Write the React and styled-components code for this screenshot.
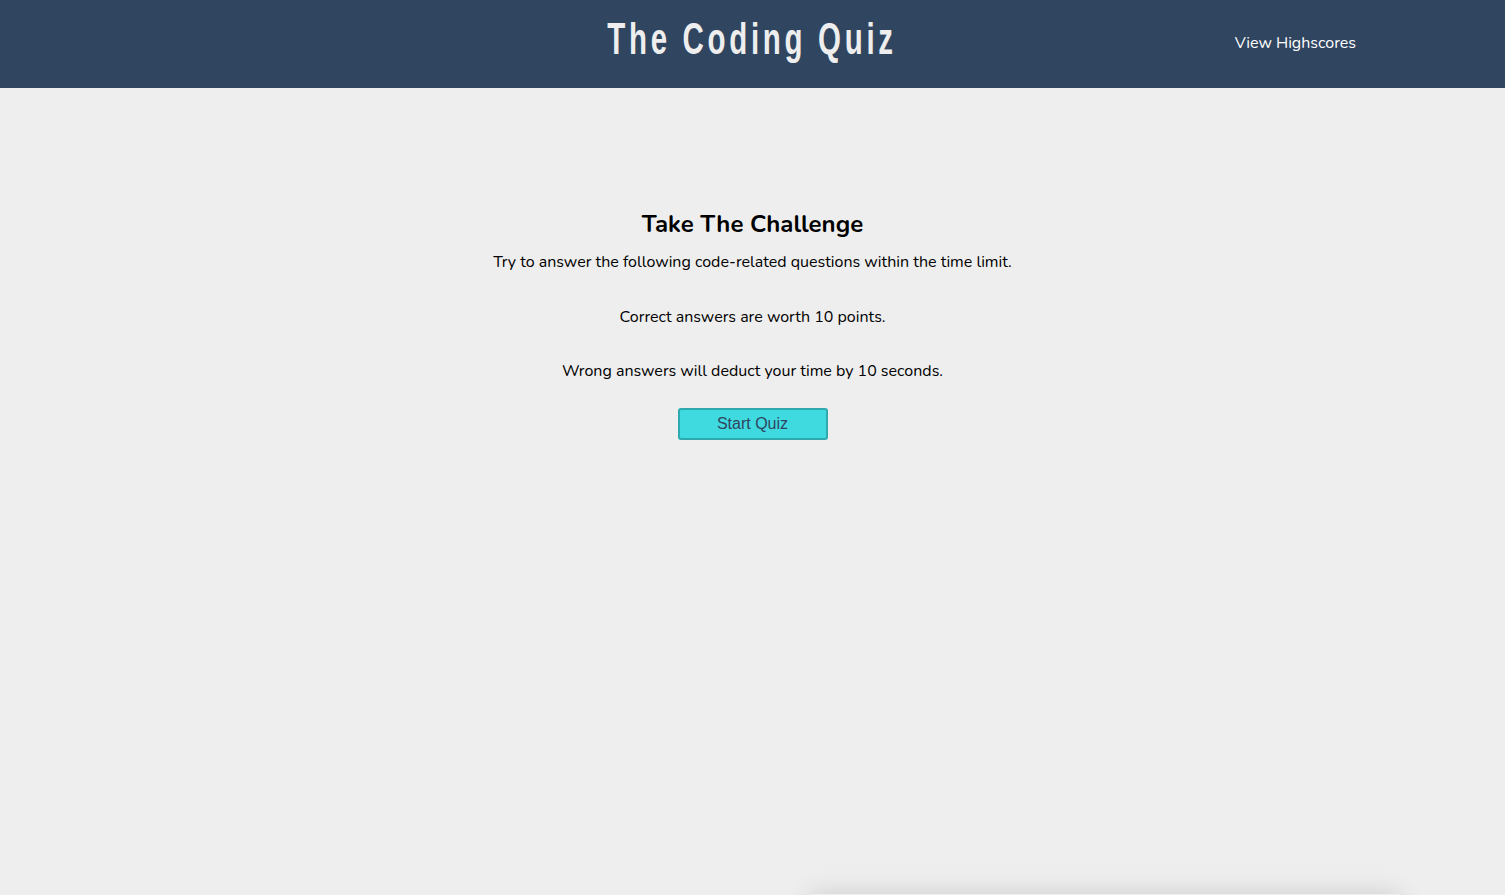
import styled, { createGlobalStyle } from "styled-components";

const GlobalStyle = createGlobalStyle`
  html, body {
    margin: 0;
    padding: 0;
    background: #eeeeee;
    font-family: "Nunito", Lato, "Noto Sans", sans-serif;
    overflow: hidden;
  }
`;

const Header = styled.header`
  height: 88px;
  background: #304560;
  display: grid;
  grid-template-columns: 1fr auto 1fr;
  align-items: center;
`;

const Title = styled.h1`
  grid-column: 2;
  margin: 0;
  padding-bottom: 10px;
  color: #eeeeee;
  font-family: "Liberation Sans", Arial, sans-serif;
  font-weight: 700;
  font-size: 44px;
  letter-spacing: 5.5px;
  transform: scale(0.67, 1);
`;

const NavLink = styled.a`
  grid-column: 3;
  justify-self: end;
  margin-right: 149px;
  color: #ffffff;
  font-size: 16px;
  cursor: pointer;
  padding-bottom: 2px;
`;

const Main = styled.main`
  display: flex;
  flex-direction: column;
  align-items: center;
  padding-top: 122px;
  height: 685px;
  box-sizing: border-box;
  text-align: center;
`;

const Heading = styled.h2`
  margin: 0 0 12px;
  font-size: 24px;
  line-height: 29px;
  font-weight: 700;
  color: #000;
`;

const Text = styled.p`
  margin: 0 0 32.5px;
  font-size: 16px;
  line-height: 22px;
  color: #000;
  &:last-of-type {
    margin-bottom: 26px;
  }
`;

const StartButton = styled.button`
  width: 150px;
  height: 32px;
  background: #3fd9e0;
  border: 2px solid #2ea9b0;
  border-radius: 3px;
  color: #2f4560;
  font-family: "Liberation Sans", Arial, sans-serif;
  font-size: 16px;
  cursor: pointer;
`;

const Bottom = styled.div`
  display: flex;
  justify-content: flex-start;
  padding-left: 810px;
`;

const Card = styled.div`
  width: 590px;
  height: 200px;
  margin-top: 121px;
  background: #eeeeee;
  box-shadow: 0 0 24px rgba(0, 0, 0, 0.14);
`;

export default function App() {
  return (
    <>
      <GlobalStyle />
      <Header>
        <Title>The Coding Quiz</Title>
        <NavLink>View Highscores</NavLink>
      </Header>
      <Main>
        <Heading>Take The Challenge</Heading>
        <Text>Try to answer the following code-related questions within the time limit.</Text>
        <Text>Correct answers are worth 10 points.</Text>
        <Text>Wrong answers will deduct your time by 10 seconds.</Text>
        <StartButton>Start Quiz</StartButton>
      </Main>
      <Bottom>
        <Card />
      </Bottom>
    </>
  );
}
